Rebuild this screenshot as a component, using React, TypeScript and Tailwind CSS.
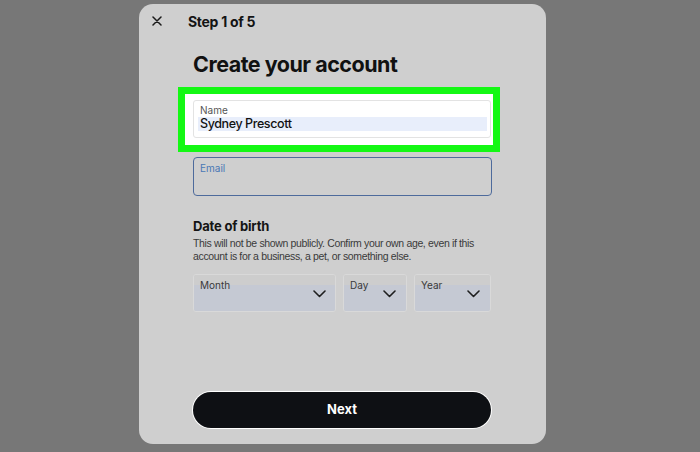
import React from 'react';

const Chevron: React.FC = () => (
  <svg width="13" height="8" viewBox="0 0 13 8" fill="none" className="shrink-0">
    <path d="M1 1l5.5 5.5L12 1" stroke="#1f1f1f" strokeWidth="1.6" strokeLinecap="round" strokeLinejoin="round" />
  </svg>
);

const Select: React.FC<{ label: string; width: string; padRight: string }> = ({ label, width, padRight }) => (
  <div className={`${width} h-[38px] rounded-[3px] border border-[#d9d9d9] overflow-hidden flex flex-col`}>
    <div className="h-[10px] bg-[#cdcdcd]" />
    <div className={`flex-1 bg-[#c5c9d3] flex items-start justify-between pl-[6px] ${padRight}`}>
      <span className="text-[10px] leading-[12px] text-[#3a3a3a] -mt-[6px]">{label}</span>
      <div className="mt-[5px]">
        <Chevron />
      </div>
    </div>
  </div>
);

const App: React.FC = () => {
  return (
    <div className="w-[700px] h-[452px] bg-[#777777] pt-[4px] pl-[139px] font-['Inter',sans-serif]">
      <div className="w-[407px] h-[440px] bg-[#cfcfcf] rounded-[14px] flex flex-col pt-[7px] pb-[16px]">
        <div className="h-[20px] flex items-center">
          <div className="w-[49px] flex items-center pl-[13px]">
            <svg width="10" height="10" viewBox="0 0 10 10" fill="none">
              <path d="M1 1l8 8M9 1L1 9" stroke="#1a1a1a" strokeWidth="1.5" strokeLinecap="round" />
            </svg>
          </div>
          <span className="text-[14px] font-bold text-[#141414] tracking-[-0.3px]">Step 1 of 5</span>
        </div>

        <div className="px-[54px] flex flex-col flex-1">
          <h1 className="mt-[19px] text-[21.5px] leading-[28px] font-bold text-[#111111] tracking-[-0.5px]">
            Create your account
          </h1>

          <div className="mt-[9px] -ml-[15px] w-[322px] border-[7px] border-[#14f814] bg-white pl-[8px] pr-[2px] pt-[6px] pb-[7px]">
            <div className="h-[38px] border border-[#e3e3e3] rounded-[3px] bg-white pl-[4px] pr-[3px] pt-[3px]">
              <div className="text-[10px] leading-[12px] text-[#555555] pl-[2px]">Name</div>
              <div className="mt-[1px] h-[14px] bg-[#e8eefb] flex items-center pl-[2px]">
                <span className="text-[12.5px] font-medium text-[#111111] tracking-[-0.4px]">Sydney Prescott</span>
              </div>
            </div>
          </div>

          <div className="mt-[5px] w-[299px] h-[39px] border-[1.5px] border-[#4e6b9c] rounded-[4px] pl-[6px] pt-[4px]">
            <div className="text-[10px] leading-[12px] text-[#4a78b5]">Email</div>
          </div>

          <div className="mt-[21px] text-[13px] leading-[18px] font-bold text-[#151515] tracking-[-0.2px]">Date of birth</div>
          <p className="mt-[2px] text-[10.5px] leading-[13px] text-[#3a3a3a] tracking-[-0.35px] font-['Liberation_Sans',sans-serif]">
            This will not be shown publicly. Confirm your own age, even if this account is for a business, a pet, or something else.
          </p>

          <div className="mt-[11px] flex gap-[7px]">
            <Select label="Month" width="w-[143px]" padRight="pr-[9px]" />
            <Select label="Day" width="w-[64px]" padRight="pr-[10px]" />
            <Select label="Year" width="w-[77px]" padRight="pr-[10px]" />
          </div>

          <button className="mt-auto h-[36px] w-[298px] rounded-full bg-[#0e1014] ring-1 ring-white text-white text-[13px] font-bold">
            Next
          </button>
        </div>
      </div>
    </div>
  );
};

export default App;
